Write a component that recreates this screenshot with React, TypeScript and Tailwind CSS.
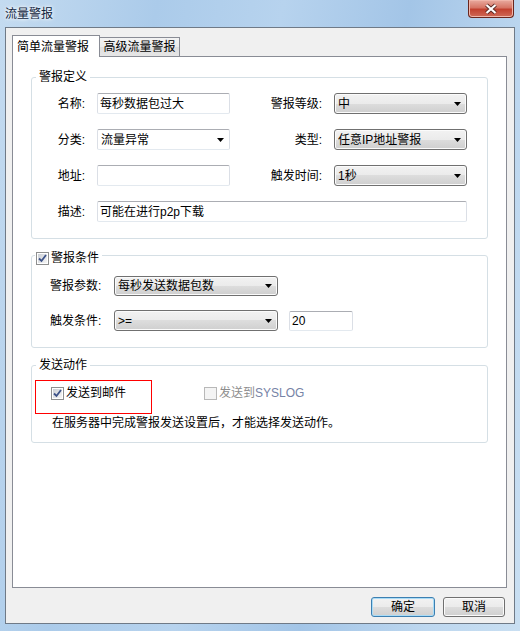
import type { ReactNode } from "react";

const Arrow = () => (
  <svg width="7" height="4" viewBox="0 0 7 4">
    <path d="M0 0h7L3.5 4z" fill="#000" />
  </svg>
);

function TextBox({ text, className }: { text?: string; className: string }) {
  return (
    <div
      className={`flex h-[21px] items-center rounded-[2px] border border-[#abadb3] border-b-[#e3e9ef] border-l-[#dbdfe6] border-r-[#dbdfe6] bg-white pl-[2px] ${className}`}
    >
      {text}
    </div>
  );
}

function Combo({
  text,
  className,
  plain,
}: {
  text: string;
  className: string;
  plain?: boolean;
}) {
  return (
    <div
      className={`flex items-center justify-between pl-[3px] pr-[5px] ${
        plain
          ? "rounded-[2px] border border-[#abadb3] border-b-[#e3e9ef] border-l-[#dbdfe6] border-r-[#dbdfe6] bg-white"
          : "rounded-[3px] border border-[#707070] bg-[linear-gradient(to_bottom,#f2f2f2_0%,#ebebeb_50%,#dddddd_50%,#cfcfcf_100%)] shadow-[inset_0_0_0_1px_#fbfbfb]"
      } ${className}`}
    >
      <span>{text}</span>
      <Arrow />
    </div>
  );
}

function CheckBox({ checked, disabled }: { checked?: boolean; disabled?: boolean }) {
  return (
    <span
      className={`flex h-[13px] w-[13px] shrink-0 items-center justify-center border ${
        disabled ? "border-[#b8b8b8] bg-[#f4f4f4]" : "border-[#8e8f8f] bg-white"
      }`}
    >
      <span
        className={`relative flex h-[9px] w-[9px] items-center justify-center ${
          disabled
            ? "bg-[#f4f4f4]"
            : "bg-[linear-gradient(135deg,#cbcfd5_0%,#f6f6f6_100%)]"
        }`}
      >
        {checked && (
          <svg width="11" height="11" viewBox="0 0 11 11" className="absolute -left-px -top-px">
            <path d="M2 5.5L4.5 8L9 2" fill="none" stroke="#3d5288" strokeWidth="1.8" />
          </svg>
        )}
      </span>
    </span>
  );
}

function Group({
  legend,
  className,
  children,
}: {
  legend: ReactNode;
  className: string;
  children: ReactNode;
}) {
  return (
    <div className={`relative rounded-[3px] border border-[#d5dfe5] ${className}`}>
      {legend}
      {children}
    </div>
  );
}

export default function App() {
  return (
    <div className="flex h-[631px] w-[520px] flex-col bg-[linear-gradient(100deg,#c4dbf0_0%,#abcbea_25%,#b7d3ee_45%,#a3c5e7_65%,#bdd7ef_85%,#c9dff2_100%)] font-['Liberation_Sans','Noto_Sans_CJK_SC',sans-serif] text-[12px] leading-[16px] text-black">
      {/* title bar */}
      <div className="flex h-[27px] justify-between pl-[5px] pr-[6px]">
        <span className="self-center text-[#10233d] [text-shadow:0_0_5px_#ffffff,0_0_3px_#ffffff]">
          流量警报
        </span>
        <div className="flex h-[18px] w-[46px] items-center justify-center rounded-b-[4px] border border-t-0 border-[#6a261d] bg-[linear-gradient(to_bottom,#e9ab9f_0%,#d67565_45%,#c2412f_55%,#cf6a57_100%)] shadow-[inset_0_0_0_1px_#f0b6aa]">
          <svg width="14" height="12" viewBox="0 0 14 12">
            <path d="M2.5 2L11.5 10M11.5 2L2.5 10" stroke="#5b2a24" strokeWidth="4" />
            <path d="M2.5 2L11.5 10M11.5 2L2.5 10" stroke="#fff" strokeWidth="2.2" />
          </svg>
        </div>
      </div>

      {/* client area */}
      <div className="mx-[5px] flex h-[597px] flex-col border border-[#6f7a87] bg-[#f0f0f0]">
        <div className="flex items-end pl-[6px] pt-[7px]">
          <div className="relative z-10 -mb-px flex h-[22px] w-[88px] items-center border border-b-0 border-[#898c95] bg-white pl-[4px]">
            简单流量警报
          </div>
          <div className="flex h-[19px] w-[80px] items-center justify-center border border-b-0 border-l-0 border-[#898c95] bg-[linear-gradient(to_bottom,#f3f3f3_0%,#ebebeb_50%,#dedede_50%,#e6e6e6_100%)]">
            高级流量警报
          </div>
        </div>

        <div className="ml-[6px] mr-[7px] flex h-[532px] flex-col border border-[#898c95] bg-white px-[18px] pt-[20px]">
          {/* 警报定义 */}
          <Group
            className="h-[162px] pt-[15px]"
            legend={
              <span className="absolute left-[4px] top-[-9px] bg-white px-[3px]">警报定义</span>
            }
          >
            <div className="flex flex-col gap-[15px]">
              <div className="flex h-[21px] items-center">
                <span className="w-[53px] text-right">名称:</span>
                <TextBox className="ml-[12px] w-[133px]" text="每秒数据包过大" />
                <span className="w-[92px] text-right">警报等级:</span>
                <Combo className="ml-[12px] h-[21px] w-[133px]" text="中" />
              </div>
              <div className="flex h-[21px] items-center">
                <span className="w-[53px] text-right">分类:</span>
                <Combo plain className="ml-[12px] h-[21px] w-[133px]" text="流量异常" />
                <span className="w-[92px] text-right">类型:</span>
                <Combo className="ml-[12px] h-[21px] w-[133px]" text="任意IP地址警报" />
              </div>
              <div className="flex h-[21px] items-center">
                <span className="w-[53px] text-right">地址:</span>
                <TextBox className="ml-[12px] w-[133px]" />
                <span className="w-[92px] text-right">触发时间:</span>
                <Combo className="ml-[12px] h-[21px] w-[133px]" text="1秒" />
              </div>
              <div className="flex h-[21px] items-center">
                <span className="w-[53px] text-right">描述:</span>
                <TextBox className="ml-[12px] w-[370px]" text="可能在进行p2p下载" />
              </div>
            </div>
          </Group>

          {/* 警报条件 */}
          <Group
            className="mt-[16px] h-[93px] pl-[18px] pt-[20px]"
            legend={
              <span className="absolute left-[3px] top-[-6px] flex items-center gap-[2px] bg-white px-[1px] pr-[3px]">
                <CheckBox checked />
                <span>警报条件</span>
              </span>
            }
          >
            <div className="flex h-[20px] items-center">
              <span className="w-[54px]">警报参数:</span>
              <Combo className="ml-[10px] h-[20px] w-[164px]" text="每秒发送数据包数" />
            </div>
            <div className="mt-[14px] flex h-[21px] items-center">
              <span className="w-[54px]">触发条件:</span>
              <Combo className="ml-[10px] h-[21px] w-[164px]" text=">=" />
              <TextBox className="ml-[11px] !h-[20px] w-[64px]" text="20" />
            </div>
          </Group>

          {/* 发送动作 */}
          <Group
            className="mt-[17px] h-[78px] pt-[19px]"
            legend={
              <>
                <span className="absolute left-[4px] top-[-9px] bg-white px-[3px]">发送动作</span>
                <span className="pointer-events-none absolute left-[3px] top-[14px] h-[34px] w-[117px] border border-[#ff0000]" />
              </>
            }
          >
            <div className="flex h-[16px] items-center pl-[19px]">
              <CheckBox checked />
              <span className="ml-[2px]">发送到邮件</span>
              <span className="ml-[78px]">
                <CheckBox disabled />
              </span>
              <span className="ml-[2px] text-[#8d8d8d]">
                发送到<span className="text-[#7683a6]">SYSLOG</span>
              </span>
            </div>
            <div className="mt-[14px] h-[16px] pl-[20px]">
              在服务器中完成警报发送设置后，才能选择发送动作。
            </div>
          </Group>
        </div>

        <div className="mt-[9px] flex justify-end gap-[8px] pr-[9px]">
          <button className="flex h-[20px] w-[64px] items-center justify-center rounded-[3px] border border-[#3c7fb1] bg-[linear-gradient(to_bottom,#f2f2f2_0%,#ebebeb_50%,#dddddd_50%,#cfcfcf_100%)] shadow-[inset_0_0_0_1px_#a9dcf7]">
            确定
          </button>
          <button className="flex h-[20px] w-[62px] items-center justify-center rounded-[3px] border border-[#707070] bg-[linear-gradient(to_bottom,#f2f2f2_0%,#ebebeb_50%,#dddddd_50%,#cfcfcf_100%)] shadow-[inset_0_0_0_1px_#fbfbfb]">
            取消
          </button>
        </div>
      </div>
    </div>
  );
}
